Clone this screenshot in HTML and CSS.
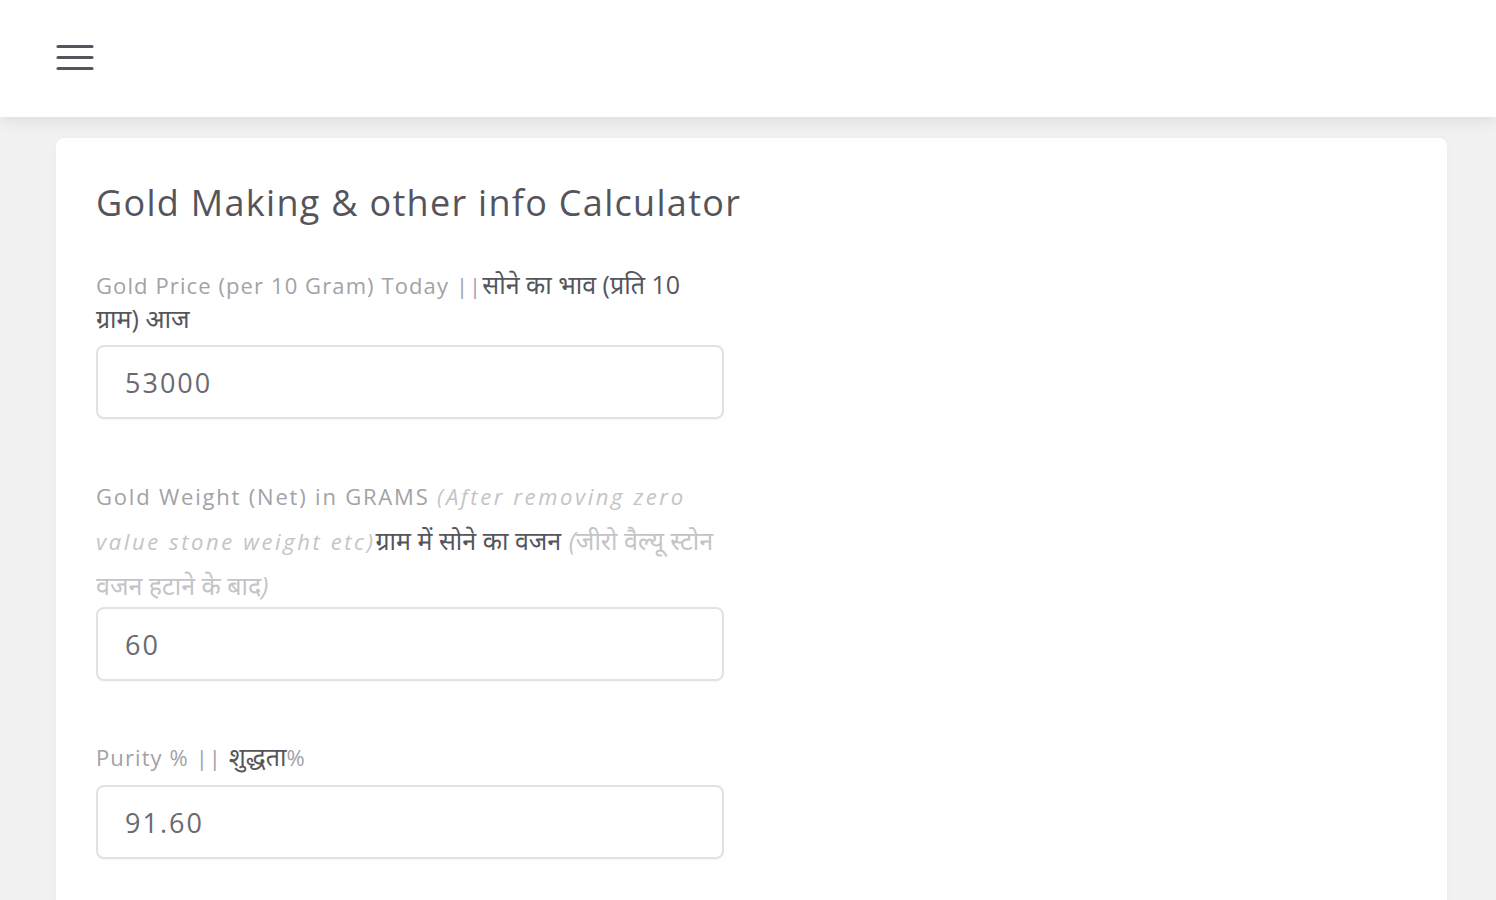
FILE: index.html
```html
<!DOCTYPE html>
<html lang="en">
<head>
<meta charset="utf-8">
<title>Gold Making &amp; other info Calculator</title>
<link rel="stylesheet" href="styles.css">
</head>
<body>
<header class="topbar">
  <button class="menu-btn" aria-label="Menu">
    <svg width="40" height="28" viewBox="0 0 40 28" aria-hidden="true">
      <path d="M3 2.5H37M3 13.5H37M3 24.5H37" stroke="#555560" stroke-width="3.2" stroke-linecap="round" fill="none"/>
    </svg>
  </button>
</header>
<main class="page">
  <section class="card">
    <h1 class="title">Gold Making &amp; other info Calculator</h1>
    <form class="form">
      <div class="group">
        <label class="label">Gold Price (per 10 Gram) Today ||<span class="hi">सोने का भाव (प्रति 10 ग्राम) आज</span></label>
        <input class="field" type="text" value="53000">
      </div>
      <div class="group">
        <label class="label label-tall">Gold Weight (Net) in GRAMS <em class="note">(After removing zero value stone weight etc)</em><span class="hi">ग्राम में सोने का वजन</span> <em class="note hi-note">(जीरो वैल्यू स्टोन वजन हटाने के बाद)</em></label>
        <input class="field" type="text" value="60">
      </div>
      <div class="group group-last">
        <label class="label label-last">Purity % || <span class="hi">शुद्धता</span>%</label>
        <input class="field" type="text" value="91.60">
      </div>
    </form>
  </section>
</main>
</body>
</html>
```
FILE: styles.css
```css
* { box-sizing: border-box; }
html, body { margin: 0; padding: 0; }
body {
  background: #f1f1f1;
  font-family: "Open Sans", "Noto Sans", "DejaVu Sans", sans-serif;
  height: 900px;
  overflow: hidden;
}
.topbar {
  height: 117px;
  background: #ffffff;
  display: flex;
  align-items: center;
  padding-left: 55px;
  box-shadow: 0 4px 14px rgba(0,0,0,0.08);
  position: relative;
  z-index: 1;
}
.menu-btn {
  border: 0;
  background: transparent;
  padding: 0;
  margin-top: -1px;
  display: flex;
  cursor: pointer;
}
.page {
  padding: 21px 49px 0 56px;
}
.card {
  background: #ffffff;
  border-radius: 8px;
  padding: 43px 40px 40px 40px;
  min-height: 800px;
  box-shadow: 0 0 6px rgba(0,0,0,0.03);
}
.title {
  margin: 0 0 43px 0;
  font-size: 36px;
  line-height: 44px;
  font-weight: 400;
  color: #54545c;
  letter-spacing: 1.3px;
}
.form {
  width: 628px;
  display: flex;
  flex-direction: column;
  gap: 56px;
}
.group {
  display: flex;
  flex-direction: column;
}
.group-last {
  margin-top: 3px;
}
.label {
  display: block;
  font-size: 22px;
  line-height: 34px;
  color: #a2a2a8;
  margin-bottom: 9px;
  letter-spacing: 1.1px;
}
.label-tall {
  line-height: 45px;
  margin-top: -1px;
  margin-bottom: -2px;
  letter-spacing: 1.8px;
}
.label-last {
  margin-bottom: 11px;
}
.hi {
  color: #55555c;
  font-size: 25px;
  line-height: 1;
  letter-spacing: 0;
}
.note {
  color: #c4c4c8;
  font-style: italic;
  letter-spacing: 2.6px;
}
.hi-note {
  font-size: 25px;
  line-height: 1;
  letter-spacing: 0;
}
.field {
  width: 628px;
  height: 74px;
  border: 2px solid #e2e2e4;
  border-radius: 8px;
  background: #fff;
  padding: 0 27px;
  font-family: inherit;
  font-size: 27px;
  letter-spacing: 2px;
  color: #6a6a70;
  outline: none;
  box-shadow: 0 1px 2px rgba(0,0,0,0.04);
}
```
